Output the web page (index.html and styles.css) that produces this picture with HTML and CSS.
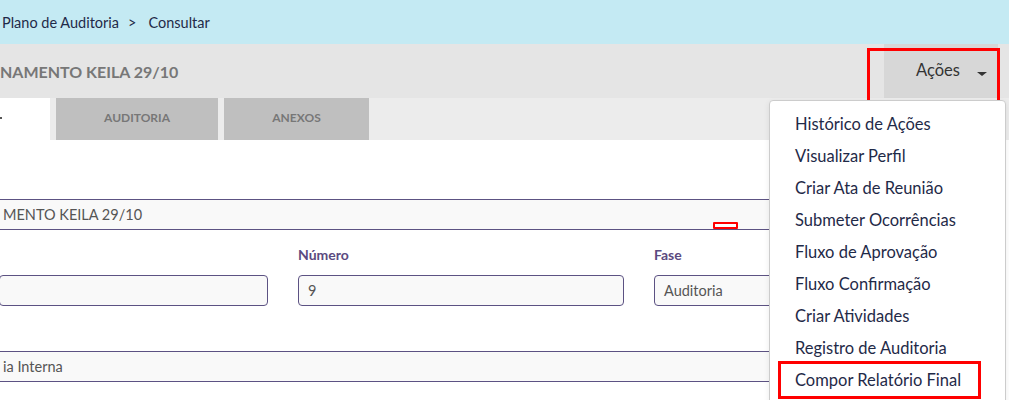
FILE: index.html
```html
<!DOCTYPE html>
<html lang="pt">
<head>
<meta charset="utf-8">
<link rel="stylesheet" href="styles.css">
</head>
<body>
<div class="page">
  <header class="crumbs">
    <span>Plano de Auditoria</span><span class="sep">&gt;</span><span>Consultar</span>
  </header>
  <div class="titlebar">
    <h1 class="title">NAMENTO KEILA 29/10</h1>
    <button class="actions">Ações <span class="caret"></span></button>
  </div>
  <nav class="tabs">
    <div class="tab active"><span class="mark"></span></div>
    <div class="tab">AUDITORIA</div>
    <div class="tab">ANEXOS</div>
  </nav>
  <main class="content">
    <div class="field full first">MENTO KEILA 29/10</div>
    <div class="row">
      <div class="col">
        <label class="lbl">&nbsp;</label>
        <div class="field box"></div>
      </div>
      <div class="col">
        <label class="lbl">Número</label>
        <div class="field box">9</div>
      </div>
      <div class="col">
        <label class="lbl">Fase</label>
        <div class="field box">Auditoria</div>
      </div>
    </div>
    <div class="field full last">ia Interna</div>
  </main>

  <div class="annot annot-actions"></div>
  <div class="annot-mini"></div>

  <ul class="menu">
    <li>Histórico de Ações</li>
    <li>Visualizar Perfil</li>
    <li>Criar Ata de Reunião</li>
    <li>Submeter Ocorrências</li>
    <li>Fluxo de Aprovação</li>
    <li>Fluxo Confirmação</li>
    <li>Criar Atividades</li>
    <li>Registro de Auditoria</li>
    <li class="hl">Compor Relatório Final</li>
  </ul>
</div>
</body>
</html>
```

FILE: styles.css
```css
*, *::before, *::after { box-sizing: border-box; }
html, body { margin: 0; padding: 0; background: #fff; }
body {
  font-family: "Lato", "Noto Sans", sans-serif;
  color: #1f2a48;
  width: 1009px;
  height: 400px;
  overflow: hidden;
}
.page { position: relative; height: 400px; }

.crumbs {
  height: 44px;
  background: #c4eaf3;
  display: flex;
  align-items: center;
  padding-left: 2px;
  font-size: 14.5px;
  color: #1f2a48;
}
.crumbs .sep { margin: 0 12px 0 9px; }

.titlebar {
  height: 54px;
  background: #e5e5e5;
  display: flex;
  align-items: center;
  justify-content: space-between;
}
.title {
  margin: 0;
  font-size: 16px;
  font-weight: 700;
  color: #777;
}
.actions {
  height: 54px;
  width: 114px;
  margin-right: 11px;
  border: 0;
  background: #d7d7d7;
  font-family: inherit;
  font-size: 16.5px;
  color: #333;
  display: flex;
  align-items: center;
  padding: 0 0 2px 32px;
}
.caret {
  margin-left: 17px;
  margin-top: 8px;
  width: 0; height: 0;
  border-left: 5px solid transparent;
  border-right: 5px solid transparent;
  border-top: 4px solid #333;
}

.tabs {
  height: 42px;
  background: #ececec;
  display: flex;
  gap: 6px;
}
.tab {
  background: #bfbfbf;
  color: #777;
  font-size: 12px;
  font-weight: 700;
  display: flex;
  align-items: center;
  justify-content: center;
  width: 162px;
  padding-bottom: 4px;
}
.tab:nth-child(3) { width: 145px; }
.tab.active { background: #fff; width: 50px; justify-content: flex-start; padding-bottom: 2px; }
.mark { width: 2px; height: 2px; background: #555; }

.content { padding-top: 59px; margin-left: -1px; }
.field {
  height: 31px;
  background: #f9f9f9;
  border: 1px solid #5c5283;
  font-size: 14.5px;
  color: #555;
  display: flex;
  align-items: center;
}
.full { width: 982px; padding-left: 3px; }
.row {
  display: grid;
  grid-template-columns: 269px 326px 326px;
  column-gap: 30px;
  margin-top: 15px;
}
.lbl {
  display: block;
  height: 30px;
  line-height: 20px;
  font-size: 14px;
  font-weight: 700;
  color: #5b4a80;
}
.box { border-radius: 4px; padding-left: 9px; }
.last { margin-top: 45px; }

.annot {
  position: absolute;
  border: 3px solid #f00;
}
.annot-actions { left: 867px; top: 48px; width: 133px; height: 55px; }
.annot-mini {
  position: absolute;
  left: 713px; top: 222px;
  width: 25px; height: 7px;
  border: 2px solid #f00;
  background: #fff;
  border-radius: 1px;
}

.menu {
  position: absolute;
  left: 769px;
  top: 100px;
  width: 237px;
  height: 320px;
  margin: 0;
  padding: 7px 0 0 0;
  list-style: none;
  background: #fff;
  border: 1px solid #ccc;
  border-radius: 4px;
  box-shadow: 0 2px 6px rgba(0,0,0,0.08);
}
.menu li {
  height: 32px;
  line-height: 32px;
  padding-left: 25px;
  font-size: 16.5px;
  color: #1f2a48;
  position: relative;
}
.menu li.hl::after {
  content: "";
  position: absolute;
  left: 8px;
  top: -3px;
  width: 203px;
  height: 38px;
  border: 3px solid #f00;
}
```
